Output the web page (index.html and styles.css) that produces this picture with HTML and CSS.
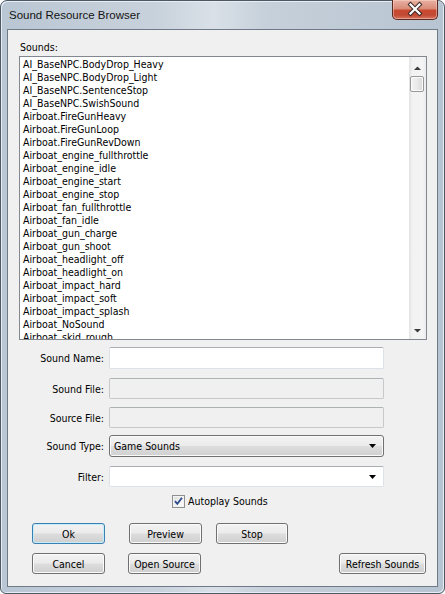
FILE: index.html
```html
<!DOCTYPE html>
<html>
<head>
<meta charset="utf-8">
<link rel="stylesheet" href="styles.css">
</head>
<body>
<div class="window">
  <div class="titlebar">
    <span class="title">Sound Resource Browser</span>
    <div class="close">
      <svg width="46" height="20" viewBox="0 0 46 20">
        <path d="M18.5 5.5 L27.5 14.5 M27.5 5.5 L18.5 14.5" stroke="#3b2a28" stroke-width="4.2" stroke-linecap="square"/>
        <path d="M18.5 5.5 L27.5 14.5 M27.5 5.5 L18.5 14.5" stroke="#ffffff" stroke-width="2.2" stroke-linecap="square"/>
      </svg>
    </div>
  </div>
  <div class="client">
    <div class="caption">Sounds:</div>
    <div class="listbox">
      <ul class="items">
        <li>AI_BaseNPC.BodyDrop_Heavy</li>
        <li>AI_BaseNPC.BodyDrop_Light</li>
        <li>AI_BaseNPC.SentenceStop</li>
        <li>AI_BaseNPC.SwishSound</li>
        <li>Airboat.FireGunHeavy</li>
        <li>Airboat.FireGunLoop</li>
        <li>Airboat.FireGunRevDown</li>
        <li>Airboat_engine_fullthrottle</li>
        <li>Airboat_engine_idle</li>
        <li>Airboat_engine_start</li>
        <li>Airboat_engine_stop</li>
        <li>Airboat_fan_fullthrottle</li>
        <li>Airboat_fan_idle</li>
        <li>Airboat_gun_charge</li>
        <li>Airboat_gun_shoot</li>
        <li>Airboat_headlight_off</li>
        <li>Airboat_headlight_on</li>
        <li>Airboat_impact_hard</li>
        <li>Airboat_impact_soft</li>
        <li>Airboat_impact_splash</li>
        <li>Airboat_NoSound</li>
        <li>Airboat_skid_rough</li>
      </ul>
      <div class="vscroll">
        <div class="sb-arrow">
          <svg width="17" height="17" viewBox="0 0 17 17"><path d="M5 13 L12 13 L8.5 9.5 Z" fill="#3a3a3a"/></svg>
        </div>
        <div class="sb-thumb"></div>
        <div class="sb-track"></div>
        <div class="sb-arrow">
          <svg width="17" height="17" viewBox="0 0 17 17"><path d="M5 7 L12 7 L8.5 10.5 Z" fill="#3a3a3a"/></svg>
        </div>
      </div>
    </div>

    <div class="row r1">
      <label class="lbl">Sound Name:</label>
      <div class="field edit"></div>
    </div>
    <div class="row r2">
      <label class="lbl">Sound File:</label>
      <div class="field disabled"></div>
    </div>
    <div class="row r3">
      <label class="lbl">Source File:</label>
      <div class="field disabled"></div>
    </div>
    <div class="row r4">
      <label class="lbl">Sound Type:</label>
      <div class="field combo">
        <span class="combo-text">Game Sounds</span>
        <svg class="arrow" width="8" height="5" viewBox="0 0 8 5"><path d="M0 0 L7 0 L3.5 4 Z" fill="#000"/></svg>
      </div>
    </div>
    <div class="row r5">
      <label class="lbl">Filter:</label>
      <div class="field edit editcombo">
        <svg class="arrow" width="8" height="5" viewBox="0 0 8 5"><path d="M0 0 L7 0 L3.5 4 Z" fill="#000"/></svg>
      </div>
    </div>

    <div class="checkrow">
      <span class="checkbox">
        <svg width="13" height="13" viewBox="0 0 13 13">
          <path d="M3 6.2 L5.3 8.8 L10 2.8" fill="none" stroke="#2b4a8a" stroke-width="1.8"/>
        </svg>
      </span>
      <span class="checklabel">Autoplay Sounds</span>
    </div>

    <div class="btnrow b1">
      <button class="btn default w73">Ok</button>
      <button class="btn w73 gap24">Preview</button>
      <button class="btn w72 gap14">Stop</button>
    </div>
    <div class="btnrow b2">
      <button class="btn w73">Cancel</button>
      <button class="btn w73 gap23">Open Source</button>
      <button class="btn w87 push">Refresh Sounds</button>
    </div>
  </div>
</div>
</body>
</html>
```

FILE: styles.css
```css
html, body {
  margin: 0;
  padding: 0;
  background: #ffffff;
}

.window {
  box-sizing: border-box;
  width: 445px;
  height: 594px;
  border: 1px solid #4d5863;
  border-radius: 7px 7px 6px 6px;
  background: linear-gradient(90deg, #b9c6d3 0%, #c8d2dc 35%, #d9e0e7 48%, #c6d0da 60%, #b7c4d1 100%);
  box-shadow: inset 1px 1px 0 #e6edf4, inset -1px -1px 0 #e6edf4;
  padding: 0 6px 6px 6px;
  display: flex;
  flex-direction: column;
  font-family: "DejaVu Sans", "Liberation Sans", sans-serif;
  font-stretch: condensed;
  font-size: 10.5px;
  color: #000;
}

.titlebar {
  height: 28px;
  display: flex;
  align-items: flex-start;
  margin: 0 -6px;
}

.title {
  font-family: "Liberation Sans", sans-serif;
  font-stretch: normal;
  font-size: 11.5px;
  line-height: 13px;
  padding: 8px 0 0 8px;
  color: #141414;
}

.close {
  margin-left: auto;
  margin-right: 6px;
  margin-top: -1px;
  width: 46px;
  height: 20px;
  box-sizing: border-box;
  border: 1px solid #5a2a22;
  border-top: none;
  border-radius: 0 0 5px 5px;
  background: linear-gradient(180deg, #e9b1a3 0%, #d98c78 45%, #c8492f 55%, #c24b35 80%, #d8765e 100%);
  box-shadow: inset 0 0 0 1px rgba(255, 220, 210, 0.45);
}

.close svg {
  display: block;
  margin: -1px 0 0 -1px;
}

.client {
  flex: 1;
  box-sizing: border-box;
  border: 1px solid #6e7a86;
  background: #f0f0f0;
  padding: 11px 10px 0 11px;
  display: flex;
  flex-direction: column;
}

.caption {
  height: 13px;
  line-height: 13px;
  margin-bottom: 2px;
  padding-left: 1px;
}

.listbox {
  box-sizing: border-box;
  height: 284px;
  border: 1px solid #828790;
  background: #ffffff;
  display: flex;
}

.items {
  list-style: none;
  margin: 0;
  padding: 1px 0 0 3px;
  flex: 1;
  overflow: hidden;
}

.items li {
  height: 13px;
  line-height: 13px;
  white-space: nowrap;
}

.vscroll {
  width: 17px;
  display: flex;
  flex-direction: column;
  background: linear-gradient(90deg, #e3e3e3 0%, #f2f2f2 20%, #f4f4f4 80%, #ebebeb 100%);
}

.sb-arrow {
  height: 17px;
}

.sb-arrow svg {
  display: block;
}

.sb-thumb {
  box-sizing: border-box;
  height: 16px;
  margin: 2px 2px 0 1px;
  border: 1px solid #989898;
  border-radius: 2px;
  background: linear-gradient(90deg, #f4f4f4 0%, #e9e9e9 50%, #d9d9d9 100%);
  box-shadow: inset 0 0 0 1px #fbfbfb;
}

.sb-track {
  flex: 1;
}

.row {
  display: flex;
  align-items: center;
  margin-left: -11px;
}

.r1 { margin-top: 7px; height: 22px; }
.r2 { margin-top: 9px; height: 21px; }
.r3 { margin-top: 8px; height: 21px; }
.r4 { margin-top: 7px; height: 22px; }
.r5 { margin-top: 9px; height: 21px; }

.lbl {
  width: 96px;
  text-align: right;
  margin-right: 5px;
  white-space: nowrap;
}

.field {
  box-sizing: border-box;
  width: 275px;
  height: 100%;
  border-radius: 2px;
  position: relative;
}

.edit {
  background: #ffffff;
  border: 1px solid #dde2e8;
  border-top-color: #abadb3;
}

.disabled {
  background: #f0f0f0;
  border: 1px solid #c6c8ca;
  border-top-color: #adb2b5;
}

.combo {
  background: linear-gradient(180deg, #f3f3f3 0%, #ebebeb 48%, #dddddd 52%, #d0d0d0 100%);
  border: 1px solid #707070;
  border-radius: 3px;
  box-shadow: inset 0 0 0 1px #fafafa;
  display: flex;
  align-items: center;
}

.combo-text {
  padding-left: 4px;
}

.arrow {
  position: absolute;
  right: 6px;
  top: 50%;
  margin-top: -2px;
}

.checkrow {
  margin-top: 8px;
  height: 13px;
  display: flex;
  align-items: center;
  padding-left: 153px;
}

.checkbox {
  box-sizing: border-box;
  width: 13px;
  height: 13px;
  border: 1px solid #8e8f8f;
  background: linear-gradient(135deg, #dcdcdc 0%, #f4f4f4 60%, #ffffff 100%);
  box-shadow: inset 0 0 0 1px #f4f4f4;
  position: relative;
}

.checkbox svg {
  position: absolute;
  left: -1px;
  top: -1px;
}

.checklabel {
  margin-left: 3px;
  line-height: 13px;
}

.btnrow {
  display: flex;
  padding-left: 13px;
  padding-right: 1px;
}

.b1 { margin-top: 15px; }
.b2 { margin-top: 9px; }

.btn {
  box-sizing: border-box;
  height: 21px;
  padding: 0;
  margin: 0;
  font-family: inherit;
  font-stretch: condensed;
  font-size: 10.5px;
  color: #000;
  border: 1px solid #707070;
  border-radius: 3px;
  background: linear-gradient(180deg, #f2f2f2 0%, #ebebeb 48%, #dddddd 52%, #cfcfcf 100%);
  box-shadow: inset 0 0 0 1px #fbfbfb;
}

.btn.default {
  border-color: #3c7fb1;
  box-shadow: inset 0 0 0 1px #c3ecfc;
}

.w73 { width: 73px; }
.w72 { width: 72px; }
.w87 { width: 87px; }
.gap24 { margin-left: 24px; }
.gap23 { margin-left: 23px; }
.gap14 { margin-left: 14px; }
.push { margin-left: auto; }
```
